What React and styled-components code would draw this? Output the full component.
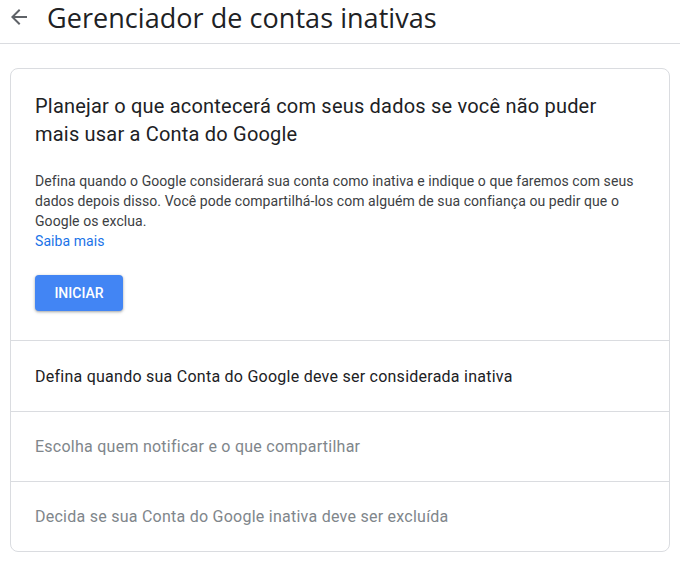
import React from 'react'
import styled, { createGlobalStyle } from 'styled-components'

var GlobalStyle = createGlobalStyle`
  body {
    margin: 0;
    background: #fff;
    font-family: Roboto, "Liberation Sans", Arial, sans-serif;
  }
`

var Header = styled.header`
  display: flex;
  align-items: center;
  height: 34px;
  padding: 0 0 9px 7px;
  border-bottom: 1px solid #dadce0;
`
var BackButton = styled.span`
  display: flex;
  width: 24px;
  height: 24px;
  color: #5f6368;
  margin-right: 16px;
`
var Title = styled.h1`
  margin: 0;
  font-family: "Open Sans", Roboto, sans-serif;
  font-weight: 400;
  font-size: 27px;
  letter-spacing: 0.05px;
  color: #202124;
`
var Card = styled.section`
  margin: 24px 10px 0;
  border: 1px solid #dadce0;
  border-radius: 8px;
  overflow: hidden;
`
var Intro = styled.div`
  padding: 23px 24px 29px;
  border-bottom: 1px solid #dadce0;
`
var Heading = styled.h2`
  margin: 0;
  max-width: 575px;
  font-size: 20px;
  line-height: 28px;
  font-weight: 400;
  letter-spacing: 0.2px;
  color: #202124;
`
var Body = styled.p`
  margin: 23px 0 0;
  font-size: 14px;
  line-height: 20px;
  letter-spacing: 0.07px;
  color: #3c4043;
`
var Link = styled.a`
  color: #1a73e8;
  text-decoration: none;
`
var StartButton = styled.button`
  display: block;
  margin-top: 24px;
  width: 88px;
  height: 36px;
  border: none;
  border-radius: 4px;
  background: #4285f4;
  color: #fff;
  font-family: Roboto, sans-serif;
  font-size: 14px;
  font-weight: 500;
  box-shadow: 0 1px 2px rgba(60, 64, 67, 0.3), 0 1px 3px 1px rgba(60, 64, 67, 0.15);
  cursor: pointer;
`
var Step = styled.div`
  box-sizing: border-box;
  display: flex;
  align-items: center;
  height: 70px;
  padding: 0 24px;
  font-size: 16px;
  letter-spacing: 0.25px;
  color: ${props => (props.active ? '#202124' : '#80868b')};
  & + & {
    border-top: 1px solid #dadce0;
  }
`

var steps = [
  'Defina quando sua Conta do Google deve ser considerada inativa',
  'Escolha quem notificar e o que compartilhar',
  'Decida se sua Conta do Google inativa deve ser excluída'
]

function ArrowBack() {
  return (
    <svg width="24" height="24" viewBox="0 0 24 24" fill="currentColor">
      <path d="M20 11H7.83l5.59-5.59L12 4l-8 8 8 8 1.41-1.41L7.83 13H20v-2z" />
    </svg>
  )
}

export default function App() {
  return (
    <div>
      <GlobalStyle />
      <Header>
        <BackButton><ArrowBack /></BackButton>
        <Title>Gerenciador de contas inativas</Title>
      </Header>
      <Card>
        <Intro>
          <Heading>
            Planejar o que acontecerá com seus dados se você não puder mais usar a Conta do Google
          </Heading>
          <Body>
            Defina quando o Google considerará sua conta como inativa e indique o que faremos com seus
            dados depois disso. Você pode compartilhá-los com alguém de sua confiança ou pedir que o
            Google os exclua.
            <br />
            <Link href="#">Saiba mais</Link>
          </Body>
          <StartButton>INICIAR</StartButton>
        </Intro>
        {steps.map((s, i) => (
          <Step key={i} active={i === 0}>{s}</Step>
        ))}
      </Card>
    </div>
  )
}
